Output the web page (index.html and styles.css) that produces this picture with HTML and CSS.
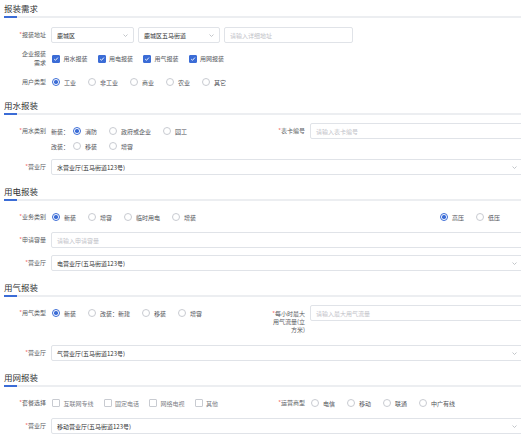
FILE: index.html
```html
<!DOCTYPE html>
<html lang="zh-CN">
<head>
<meta charset="utf-8">
<title>报装需求</title>
<link rel="stylesheet" href="styles.css">
</head>
<body>
<div class="page">

  <section class="sec sec-first">
    <h2 class="title">报装需求</h2>
    <div class="rows">
      <div class="row">
        <label class="lbl"><i class="req">*</i>报装地址</label>
        <div class="ctl">
          <div class="select w83"><span class="val">鹿城区</span><svg class="caret" width="5" height="3" viewBox="0 0 5 3"><path d="M0.5 0.5L2.5 2.5L4.5 0.5" fill="none" stroke="#b4b7bd" stroke-width="0.8"/></svg></div>
          <div class="select w82"><span class="val">鹿城区五马街道</span><svg class="caret" width="5" height="3" viewBox="0 0 5 3"><path d="M0.5 0.5L2.5 2.5L4.5 0.5" fill="none" stroke="#b4b7bd" stroke-width="0.8"/></svg></div>
          <div class="input w129"><span class="ph">请输入详细地址</span></div>
        </div>
      </div>
      <div class="row">
        <label class="lbl lbl-wrap">企业报装<br>需求</label>
        <div class="ctl">
          <span class="cb on"><i><svg width="6" height="6" viewBox="0 0 6 6"><path d="M1.2 3.1L2.5 4.3L4.9 1.6" fill="none" stroke="#fff" stroke-width="0.9"/></svg></i>用水报装</span>
          <span class="cb on"><i><svg width="6" height="6" viewBox="0 0 6 6"><path d="M1.2 3.1L2.5 4.3L4.9 1.6" fill="none" stroke="#fff" stroke-width="0.9"/></svg></i>用电报装</span>
          <span class="cb on"><i><svg width="6" height="6" viewBox="0 0 6 6"><path d="M1.2 3.1L2.5 4.3L4.9 1.6" fill="none" stroke="#fff" stroke-width="0.9"/></svg></i>用气报装</span>
          <span class="cb on"><i><svg width="6" height="6" viewBox="0 0 6 6"><path d="M1.2 3.1L2.5 4.3L4.9 1.6" fill="none" stroke="#fff" stroke-width="0.9"/></svg></i>用网报装</span>
        </div>
      </div>
      <div class="row">
        <label class="lbl">用户类型</label>
        <div class="ctl">
          <span class="rd on"><i></i>工业</span>
          <span class="rd"><i></i>非工业</span>
          <span class="rd"><i></i>商业</span>
          <span class="rd"><i></i>农业</span>
          <span class="rd"><i></i>其它</span>
        </div>
      </div>
    </div>
  </section>

  <section class="sec">
    <h2 class="title">用水报装</h2>
    <div class="rows">
      <div class="row split top tight">
        <div class="cell">
          <label class="lbl"><i class="req">*</i>用水类别</label>
          <div class="grp">
            <div class="line">
              <span class="pre">新装：</span>
              <span class="rd on"><i></i>消防</span>
              <span class="rd"><i></i>政府或企业</span>
              <span class="rd"><i></i>园工</span>
            </div>
            <div class="line line2">
              <span class="pre">改装：</span>
              <span class="rd"><i></i>移装</span>
              <span class="rd"><i></i>增容</span>
            </div>
          </div>
        </div>
        <div class="cell">
          <label class="lbl lbl-r"><i class="req">*</i>表卡编号</label>
          <div class="ctl">
            <div class="input grow"><span class="ph">请输入表卡编号</span></div>
          </div>
        </div>
      </div>
      <div class="row">
        <label class="lbl"><i class="req">*</i>营业厅</label>
        <div class="ctl">
          <div class="select grow"><span class="val">水营业厅(五马街道123号)</span><svg class="caret" width="5" height="3" viewBox="0 0 5 3"><path d="M0.5 0.5L2.5 2.5L4.5 0.5" fill="none" stroke="#b4b7bd" stroke-width="0.8"/></svg></div>
        </div>
      </div>
    </div>
  </section>

  <section class="sec">
    <h2 class="title">用电报装</h2>
    <div class="rows">
      <div class="row split">
        <div class="cell">
          <label class="lbl"><i class="req">*</i>业务类别</label>
          <div class="ctl">
            <span class="rd on"><i></i>新装</span>
            <span class="rd"><i></i>增容</span>
            <span class="rd"><i></i>临时用电</span>
            <span class="rd"><i></i>增装</span>
          </div>
        </div>
        <div class="cell volt">
          <span class="rd on"><i></i>高压</span>
          <span class="rd"><i></i>低压</span>
        </div>
      </div>
      <div class="row">
        <label class="lbl"><i class="req">*</i>申请容量</label>
        <div class="ctl">
          <div class="input grow"><span class="ph">请输入申请容量</span></div>
        </div>
      </div>
      <div class="row">
        <label class="lbl"><i class="req">*</i>营业厅</label>
        <div class="ctl">
          <div class="select grow"><span class="val">电营业厅(五马街道123号)</span><svg class="caret" width="5" height="3" viewBox="0 0 5 3"><path d="M0.5 0.5L2.5 2.5L4.5 0.5" fill="none" stroke="#b4b7bd" stroke-width="0.8"/></svg></div>
        </div>
      </div>
    </div>
  </section>

  <section class="sec">
    <h2 class="title">用气报装</h2>
    <div class="rows">
      <div class="row split top">
        <div class="cell">
          <label class="lbl"><i class="req">*</i>用气类型</label>
          <div class="ctl h16">
            <span class="rd on"><i></i>新装</span>
            <span class="rd"><i></i>改装：新建</span>
            <span class="rd"><i></i>移装</span>
            <span class="rd"><i></i>增容</span>
          </div>
        </div>
        <div class="cell">
          <label class="lbl lbl-r lbl-multi"><i class="req">*</i>每小时最大<br>用气流量(立<br>方米)</label>
          <div class="ctl h16">
            <div class="input grow"><span class="ph">请输入最大用气流量</span></div>
          </div>
        </div>
      </div>
      <div class="row">
        <label class="lbl"><i class="req">*</i>营业厅</label>
        <div class="ctl">
          <div class="select grow"><span class="val">气营业厅(五马街道123号)</span><svg class="caret" width="5" height="3" viewBox="0 0 5 3"><path d="M0.5 0.5L2.5 2.5L4.5 0.5" fill="none" stroke="#b4b7bd" stroke-width="0.8"/></svg></div>
        </div>
      </div>
    </div>
  </section>

  <section class="sec">
    <h2 class="title">用网报装</h2>
    <div class="rows">
      <div class="row split">
        <div class="cell">
          <label class="lbl"><i class="req">*</i>套餐选择</label>
          <div class="ctl">
            <span class="cb off"><i></i>互联网专线</span>
            <span class="cb off"><i></i>固定电话</span>
            <span class="cb off"><i></i>网络电视</span>
            <span class="cb off"><i></i>其他</span>
          </div>
        </div>
        <div class="cell">
          <label class="lbl lbl-r"><i class="req">*</i>运营商型</label>
          <div class="ctl">
            <span class="rd"><i></i>电信</span>
            <span class="rd"><i></i>移动</span>
            <span class="rd"><i></i>联通</span>
            <span class="rd"><i></i>中广有线</span>
          </div>
        </div>
      </div>
      <div class="row">
        <label class="lbl"><i class="req">*</i>营业厅</label>
        <div class="ctl">
          <div class="select grow"><span class="val">移动营业厅(五马街道123号)</span><svg class="caret" width="5" height="3" viewBox="0 0 5 3"><path d="M0.5 0.5L2.5 2.5L4.5 0.5" fill="none" stroke="#b4b7bd" stroke-width="0.8"/></svg></div>
        </div>
      </div>
    </div>
  </section>

</div>
</body>
</html>
```

FILE: styles.css
```css
* {
  box-sizing: border-box;
  margin: 0;
  padding: 0;
}

html, body {
  background: #ffffff;
}

body {
  width: 521px;
  overflow: hidden;
  font-family: "Noto Sans CJK SC", "Noto Sans", sans-serif;
  font-size: 6px;
  color: #4f5258;
}

.page {
  width: 521px;
  overflow: hidden;
}

.sec {
  padding: 0 0 8px 4px;
}

.sec-first {
  padding-bottom: 7px;
}

.title {
  height: 18px;
  line-height: 16px;
  padding-bottom: 2px;
  font-size: 8.5px;
  font-weight: 400;
  color: #303133;
  background:
    linear-gradient(#3b6cd6, #3b6cd6) left bottom / 13px 2px no-repeat,
    linear-gradient(#eceef1, #eceef1) left bottom / 100% 2px no-repeat;
}

.rows {
  margin-top: 8px;
  display: flex;
  flex-direction: column;
  gap: 7px;
}

.sec-first .rows {
  margin-top: 9px;
}

.row {
  display: flex;
  align-items: center;
  min-height: 16px;
}

.row.top {
  align-items: flex-start;
}

.row.tight {
  margin-bottom: -1px;
}

.split .cell {
  display: flex;
  align-items: center;
}

.split.top .cell {
  align-items: flex-start;
}

.split .cell:first-child {
  flex: 0 0 255px;
}

.split .cell:last-child {
  flex: 1;
  min-width: 0;
}

.lbl {
  flex: 0 0 47px;
  padding-right: 5px;
  text-align: right;
  line-height: 16px;
  color: #5a5d63;
  white-space: nowrap;
}

.lbl-wrap {
  line-height: 8.5px;
}

.lbl-r {
  flex-basis: 51px;
}

.lbl-multi {
  line-height: 8px;
  padding-top: 5px;
  padding-bottom: 4px;
}

.req {
  font-style: normal;
  color: #f56c6c;
}

.ctl {
  flex: 1;
  min-width: 0;
  display: flex;
  align-items: center;
}

.h16 {
  height: 16px;
}

.select,
.input {
  display: flex;
  align-items: center;
  height: 16px;
  padding: 0 5px;
  border: 1px solid #e0e3e8;
  border-radius: 2px;
  background: #fff;
  white-space: nowrap;
  overflow: hidden;
}

.select {
  justify-content: space-between;
}

.select + .select,
.select + .input {
  margin-left: 4px;
}

.w83 { width: 83px; flex: none; }
.w82 { width: 82px; flex: none; }
.w129 { width: 129px; flex: none; }

.grow {
  flex: 1;
  min-width: 0;
  margin-right: -2px;
}

.val {
  color: #303133;
}

.ph {
  color: #bfc2c8;
}

.caret {
  flex: none;
  display: block;
}

/* radio */
.rd {
  display: inline-flex;
  align-items: center;
  margin-right: 11px;
  white-space: nowrap;
  color: #4f5258;
}

.rd i {
  flex: none;
  display: flex;
  align-items: center;
  justify-content: center;
  width: 8px;
  height: 8px;
  margin: 0 4px 0 1px;
  border: 1px solid #c8cbd1;
  border-radius: 50%;
  background: #fff;
}

.rd.on i {
  border-color: #3b6cd6;
}

.rd.on i::after {
  content: "";
  width: 3.4px;
  height: 3.4px;
  border-radius: 50%;
  background: #3b6cd6;
}

/* checkbox */
.cb {
  display: inline-flex;
  align-items: center;
  margin-right: 9px;
  white-space: nowrap;
  color: #55585e;
}

.cb i {
  flex: none;
  display: flex;
  align-items: center;
  justify-content: center;
  width: 8px;
  height: 8px;
  margin: 0 3.5px 0 1px;
  border: 1px solid #c8cbd1;
  border-radius: 1px;
  background: #fff;
}

.cb i svg {
  display: block;
}

.cb.on i {
  background: #3b6cd6;
  border-color: #3b6cd6;
}

.cb.off {
  color: #7d8086;
}

/* water group */
.grp {
  display: flex;
  flex-direction: column;
}

.line {
  display: flex;
  align-items: center;
  height: 16px;
}

.line2 {
  height: 14px;
}

.pre {
  margin-right: 3px;
  color: #4f5258;
}

.volt {
  padding-left: 180px;
  height: 16px;
}
```
